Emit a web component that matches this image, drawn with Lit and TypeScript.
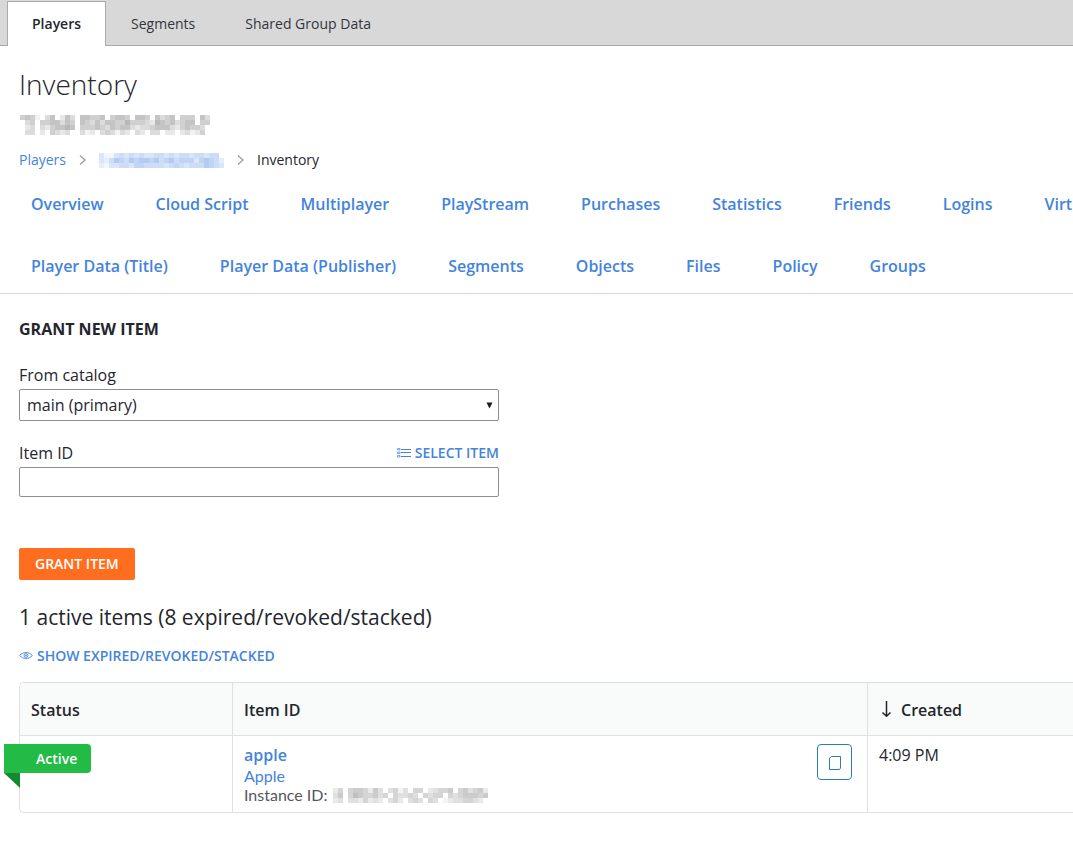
import { LitElement, html, css, svg } from "lit";
import { customElement, property } from "lit/decorators.js";

/** Obscured identifier: each digit is the density (0-9) of one block. */
@customElement("masked-id")
class MaskedId extends LitElement {
  static styles = css`
    :host { display: inline-block; }
    svg { display: block; }
  `;
  @property({ attribute: false }) rows: string[] = [];
  @property({ type: Number }) cell = 5;
  @property() color = "#666666";

  render() {
    const cols = this.rows.length ? this.rows[0].length : 0;
    const w = cols * this.cell;
    const h = this.rows.length * this.cell;
    return html`<svg width=${w} height=${h} viewBox="0 0 ${w} ${h}" shape-rendering="crispEdges" role="img" aria-label="Hidden ID">
      ${this.rows.map((row, y) => [...row].map((d, x) => d === "0" ? null : svg`
        <rect x=${x * this.cell} y=${y * this.cell} width=${this.cell} height=${this.cell}
          fill=${this.color} fill-opacity=${Number(d) / 13}></rect>`))}
    </svg>`;
  }
}

const TITLE_ID = [
  "45410350253055445045540554053450444053",
  "03404455354054353554464443265453455044",
  "02303245565044454354553233455532454430",
  "03302043230031203431320320330220231240",
];
const CRUMB_ID = [
  "3113434343344343443443440",
  "3246546566564564555356542",
  "2133443554444345434446543",
];
const INSTANCE_ID = [
  "02404554253034130440234450453452",
  "03504654453404334304344043455545",
  "02303324232034203430430123344320",
];

const TABS = ["Players", "Segments", "Shared Group Data"];
const NAV = [
  ["Overview", "Cloud Script", "Multiplayer", "PlayStream", "Purchases", "Statistics", "Friends", "Logins", "Virtual Currency"],
  ["Player Data (Title)", "Player Data (Publisher)", "Segments", "Objects", "Files", "Policy", "Groups"],
];

const chevron = html`<svg class="chevron" width="7" height="12" viewBox="0 0 7 12" aria-hidden="true">
  <path d="M1 1.500 6 6 1 10.500" fill="none" stroke="#999" stroke-width="1.2"/></svg>`;

@customElement("app-root")
class AppRoot extends LitElement {
  static styles = css`
    :host {
      display: block;
      overflow: hidden;
      background: #fff;
      color: #24262d;
      font: 400 16px/24px "Open Sans", "Noto Sans", sans-serif;
    }
    * { box-sizing: border-box; }
    a { color: #4384dc; text-decoration: none; }
    svg { flex: none; }
    h1, h2, h3, p { margin: 0; }

    .tabs {
      display: flex;
      height: 46px;
      padding: 1px 7px 0;
      background: #d8d8d8;
      border-bottom: 1px solid #aaa;
      font-size: 14px;
    }
    .tab {
      height: 45px;
      padding: 0 24px;
      border: 1px solid transparent;
      border-bottom: 0;
      line-height: 44px;
      color: #33353c;
    }
    .tab.active {
      background: #fff;
      border-color: #aaa;
      color: #24262d;
      font-weight: 600;
    }

    .head { padding: 19px 0 0 19px; }
    h1 { font-size: 28px; line-height: 38px; font-weight: 300; }
    .player-id { display: flex; padding: 12px 0 15px 1px; }
    .crumbs {
      display: flex;
      align-items: center;
      font-size: 14px;
      line-height: 20px;
    }
    .crumbs a { display: flex; }
    .chevron { margin: 0 13px; }

    .nav {
      display: grid;
      gap: 38px;
      padding: 22px 0 15px 31px;
      border-bottom: 1px solid #d8dadb;
      font-weight: 600;
      overflow: hidden;
    }
    .nav-row { display: flex; gap: 52px; white-space: nowrap; }

    .content { padding: 23px 0 32px 19px; }
    h2 { font-size: 16px; line-height: 24px; font-weight: 700; }
    .form { max-width: 480px; margin-top: 22px; }
    .field { display: grid; gap: 2px; margin-bottom: 20px; }
    .field-head { display: flex; justify-content: space-between; }
    .action {
      display: inline-flex;
      align-items: center;
      gap: 4px;
      font-size: 14px;
      font-weight: 600;
    }
    .select-wrap { display: grid; align-items: center; }
    .select-wrap > * { grid-area: 1 / 1; }
    .caret { justify-self: end; margin-right: 6px; pointer-events: none; }
    select, input {
      width: 100%;
      height: 32px;
      padding: 0 7px;
      border: 1px solid #8d8f92;
      border-radius: 2px;
      background: #fff;
      color: inherit;
      font: inherit;
      appearance: none;
    }
    input { height: 30px; }
    .grant {
      display: block;
      height: 32px;
      margin-top: 51px;
      padding: 0 16px;
      border: 0;
      border-radius: 2px;
      background: #ff6d1f;
      color: #fff;
      font: 600 14px/32px "Open Sans", "Noto Sans", sans-serif;
    }
    h3 { margin: 21px 0 10px; font-size: 21px; line-height: 32px; font-weight: 400; }

    table {
      width: 100%;
      margin-top: 14px;
      table-layout: fixed;
      border: 1px solid #dfe0e1;
      border-right: 0;
      border-radius: 5px 0 0 5px;
      border-spacing: 0;
    }
    .col-status { width: 212px; }
    .col-created { width: 206px; }
    th {
      height: 53px;
      padding: 2px 11px 0;
      background: #f9fafa;
      border-bottom: 1px solid #dfe0e1;
      font-weight: 600;
      text-align: left;
    }
    th:first-child { border-top-left-radius: 4px; }
    th + th, td + td { border-left: 1px solid #dfe0e1; }
    td { height: 76px; padding: 7px 11px 6px; vertical-align: top; }
    .sort { display: flex; align-items: center; gap: 9px; }
    .status { position: relative; }
    .ribbon {
      position: absolute;
      top: 8px;
      left: -16px;
      height: 29px;
      padding: 0 14px 0 32px;
      border-radius: 0 4px 4px 0;
      background: #22bb46;
      color: #fff;
      font-size: 14px;
      line-height: 29px;
      font-weight: 600;
    }
    .ribbon::after {
      content: "";
      position: absolute;
      top: 100%;
      left: 0;
      width: 16px;
      height: 15px;
      background: #148a30;
      clip-path: polygon(0 0, 100% 0, 100% 100%);
    }
    .item { display: flex; justify-content: space-between; padding-right: 4px; }
    .item-name { display: block; font-weight: 600; }
    .item-sub { display: block; font: 400 16px/18px Lato, sans-serif; }
    .instance {
      display: flex;
      align-items: center;
      color: #55585e;
      font: 400 16px/20px Lato, sans-serif;
      white-space: nowrap;
    }
    .copy {
      display: grid;
      place-items: center;
      width: 35px;
      height: 36px;
      margin-top: 1px;
      padding: 2px 0 0;
      border: 1px solid #2a7dba;
      border-radius: 4px;
      background: #fff;
    }
  `;

  render() {
    return html`
      <nav class="tabs" aria-label="Sections">
        ${TABS.map((t, i) => html`<a class="tab ${i === 0 ? "active" : ""}" href="#">${t}</a>`)}
      </nav>
      <header class="head">
        <h1>Inventory</h1>
        <div class="player-id"><masked-id .rows=${TITLE_ID}></masked-id></div>
        <nav class="crumbs" aria-label="Breadcrumb">
          <a href="#">Players</a>${chevron}
          <a href="#"><masked-id .rows=${CRUMB_ID} color="#5b8ee6"></masked-id></a>${chevron}
          <span>Inventory</span>
        </nav>
      </header>
      <nav class="nav" aria-label="Player pages">
        ${NAV.map(row => html`<div class="nav-row">${row.map(n => html`<a href="#">${n}</a>`)}</div>`)}
      </nav>
      <main class="content">
        <h2>GRANT NEW ITEM</h2>
        <form class="form" @submit=${(e: Event) => e.preventDefault()}>
          <div class="field">
            <label for="catalog">From catalog</label>
            <div class="select-wrap">
              <select id="catalog"><option>main (primary)</option></select>
              <svg class="caret" width="7" height="7" viewBox="0 0 7 7" aria-hidden="true"><path d="M.5 .5h6L3.500 6.500z" fill="#1b1b1b"/></svg>
            </div>
          </div>
          <div class="field">
            <div class="field-head">
              <label for="item">Item ID</label>
              <a class="action" href="#">
                <svg width="14" height="12" viewBox="0 0 14 12" fill="none" stroke="#4384dc" aria-hidden="true">
                  <path d="M4 2.500H14M4 5.500H14M4 9.500H14" stroke-width="1"/>
                  <path d="M.5 1.500h2.500v1.500h-2.500zM.5 5h2.500v1.500h-2.500zM.5 8.500h2.500v1.500h-2.500z" stroke-width=".7"/>
                </svg>SELECT ITEM</a>
            </div>
            <input id="item" type="text">
          </div>
          <button class="grant" type="submit">GRANT ITEM</button>
        </form>
        <h3>1 active items (8 expired/revoked/stacked)</h3>
        <a class="action" href="#">
          <svg width="14" height="10" viewBox="0 0 14 10" fill="none" stroke="#4384dc" aria-hidden="true">
            <path d="M.6 4.500C2.500 2.400 4.600 1.500 7 1.500S11.500 2.400 13.400 4.500C11.500 6.600 9.400 7.500 7 7.500S2.500 6.600 .6 4.500z" stroke-width=".9"/>
            <circle cx="7" cy="4.500" r="1.900" stroke-width=".9"/><circle cx="7" cy="4.500" r=".4"/>
          </svg>SHOW EXPIRED/REVOKED/STACKED</a>
        <table>
          <colgroup><col class="col-status"><col><col class="col-created"></colgroup>
          <thead>
            <tr>
              <th>Status</th>
              <th>Item ID</th>
              <th><span class="sort">
                <svg width="13" height="18" viewBox="0 0 13 18" fill="none" stroke="#24262d" stroke-width="1.500" aria-hidden="true">
                  <path d="M7.500 0V15M3.500 11.500 7.500 15.200 11.500 11.500"/></svg>Created</span></th>
            </tr>
          </thead>
          <tbody>
            <tr>
              <td class="status"><span class="ribbon">Active</span></td>
              <td>
                <div class="item">
                  <div>
                    <a class="item-name" href="#">apple</a>
                    <a class="item-sub" href="#">Apple</a>
                    <p class="instance">Instance ID:<masked-id .rows=${INSTANCE_ID} color="#777777"></masked-id></p>
                  </div>
                  <button class="copy" type="button" aria-label="Copy">
                    <svg width="12" height="14" viewBox="0 0 12 14" fill="none" stroke="#2a7dba" aria-hidden="true">
                      <path d="M2.500 .5H11.500V12L10.500 13.500H.5V2z"/></svg>
                  </button>
                </div>
              </td>
              <td>4:09 PM</td>
            </tr>
          </tbody>
        </table>
      </main>
    `;
  }
}
